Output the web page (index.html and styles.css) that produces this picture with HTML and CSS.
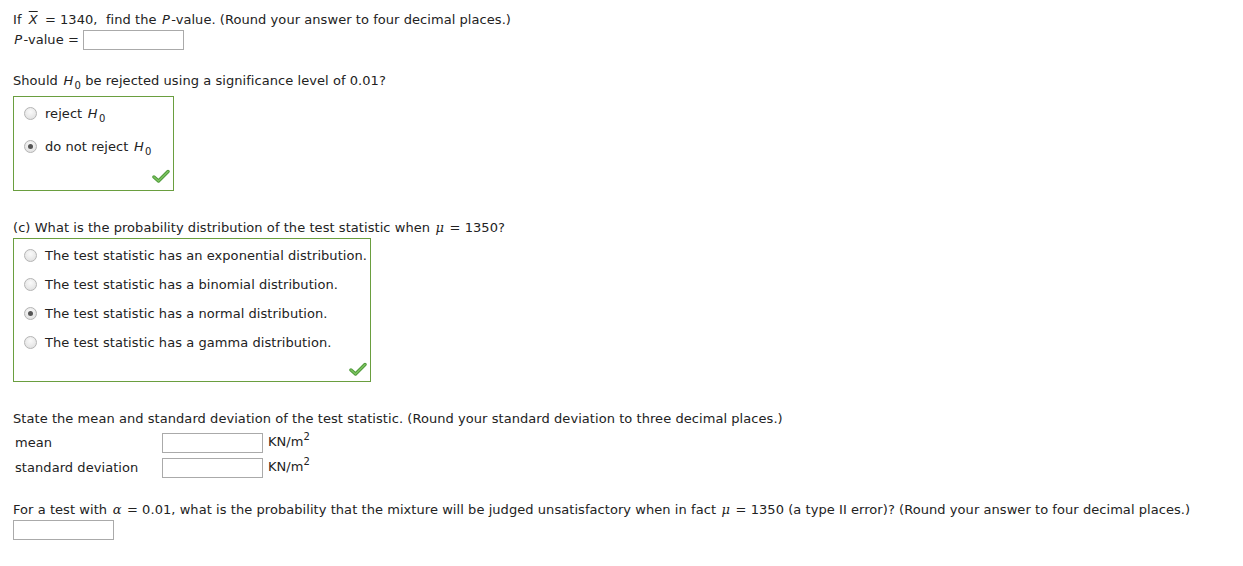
FILE: index.html
```html
<!DOCTYPE html>
<html>
<head>
<meta charset="utf-8">
<link rel="stylesheet" href="styles.css">
</head>
<body>
<div class="page">
  <div class="line">If <span class="xbar">X</span> = 1340,&nbsp; find the <i>P</i>-value. (Round your answer to four decimal places.)</div>
  <div class="line"><i>P</i>-value = <span class="inp"></span></div>

  <div class="line q2">Should <i>H</i><sub>0</sub> be rejected using a significance level of 0.01?</div>
  <div class="box box1">
    <div class="opt"><span class="radio"></span><span>reject <i>H</i><sub>0</sub></span></div>
    <div class="opt"><span class="radio on"></span><span>do not reject <i>H</i><sub>0</sub></span></div>
    <div class="checkrow">
      <svg class="check" width="18" height="15" viewBox="0 0 18 15"><path d="M2 8 L6.5 12 L16 2.5" fill="none" stroke="#4f9a3a" stroke-width="3.4" stroke-linecap="round" stroke-linejoin="round"/><path d="M2 8 L6.5 12 L16 2.5" fill="none" stroke="#7cc360" stroke-width="1.5" stroke-linecap="round" stroke-linejoin="round"/></svg>
    </div>
  </div>

  <div class="line q3">(c) What is the probability distribution of the test statistic when <i class="gr">μ</i> = 1350?</div>
  <div class="box box2">
    <div class="opt2"><span class="radio"></span><span>The test statistic has an exponential distribution.</span></div>
    <div class="opt2"><span class="radio"></span><span>The test statistic has a binomial distribution.</span></div>
    <div class="opt2"><span class="radio on"></span><span>The test statistic has a normal distribution.</span></div>
    <div class="opt2"><span class="radio"></span><span>The test statistic has a gamma distribution.</span></div>
    <div class="checkrow2">
      <svg class="check" width="18" height="15" viewBox="0 0 18 15"><path d="M2 8 L6.5 12 L16 2.5" fill="none" stroke="#4f9a3a" stroke-width="3.4" stroke-linecap="round" stroke-linejoin="round"/><path d="M2 8 L6.5 12 L16 2.5" fill="none" stroke="#7cc360" stroke-width="1.5" stroke-linecap="round" stroke-linejoin="round"/></svg>
    </div>
  </div>

  <div class="line q4">State the mean and standard deviation of the test statistic. (Round your standard deviation to three decimal places.)</div>
  <div class="grid">
    <div class="lbl">mean</div><span class="inp"></span><div class="unit">KN/m<sup>2</sup></div>
    <div class="lbl">standard deviation</div><span class="inp"></span><div class="unit">KN/m<sup>2</sup></div>
  </div>

  <div class="line q5">For a test with <i class="gr">α</i> = 0.01, what is the probability that the mixture will be judged unsatisfactory when in fact <i class="gr">μ</i> = 1350 (a type II error)? (Round your answer to four decimal places.)</div>
  <div class="line"><span class="inp"></span></div>
</div>
</body>
</html>
```

FILE: styles.css
```css
html, body {
  margin: 0;
  padding: 0;
  background: #fff;
}
.page {
  padding: 10px 0 0 13px;
  font-family: "DejaVu Sans", Verdana, sans-serif;
  font-size: 13px;
  letter-spacing: 0.06px;
  color: #222;
}
.line {
  display: block;
  height: 20px;
  line-height: 20px;
  white-space: nowrap;
}
.line i, .opt i, .opt2 i { margin: 0 0.1em; }
i { font-style: italic; }
sub {
  font-size: 10px;
  vertical-align: -4px;
  line-height: 0;
  font-style: normal;
}
sup {
  font-size: 10px;
  vertical-align: 6px;
  line-height: 0;
}
.gr { font-family: "DejaVu Serif", serif; }
.xbar {
  font-style: italic;
  text-decoration: overline;
  margin: 0 3px;
}
.inp {
  display: inline-block;
  box-sizing: border-box;
  width: 101px;
  height: 20px;
  border: 1px solid #aaa;
  background: #fff;
  vertical-align: top;
  margin: 0;
}
.q2 { margin-top: 21px; }
.box {
  box-sizing: border-box;
  border: 1px solid #6a9e3f;
}
.box1 {
  margin-top: 5px;
  width: 161px;
  height: 95px;
}
.opt {
  height: 33px;
  display: flex;
  align-items: center;
  padding-left: 10px;
  white-space: nowrap;
}
.radio {
  display: inline-block;
  box-sizing: border-box;
  width: 13px;
  height: 13px;
  border-radius: 50%;
  border: 1px solid #b4b4b4;
  background: radial-gradient(circle at 50% 35%, #fafafa 0%, #e2e2e2 80%);
  margin-right: 8px;
  position: relative;
  flex: none;
}
.radio.on::after {
  content: "";
  position: absolute;
  left: 3px;
  top: 3px;
  width: 5px;
  height: 5px;
  border-radius: 50%;
  background: #555;
}
.checkrow {
  height: 27px;
  display: flex;
  justify-content: flex-end;
  align-items: center;
  padding-right: 3px;
}
.q3 { margin-top: 27px; }
.box2 {
  width: 358px;
  height: 144px;
  padding-top: 2px;
}
.opt2 {
  height: 29px;
  display: flex;
  align-items: center;
  padding-left: 10px;
  white-space: nowrap;
}
.checkrow2 {
  height: 24px;
  display: flex;
  justify-content: flex-end;
  align-items: center;
  padding-right: 3px;
}
.q4 { margin-top: 27px; }
.grid {
  margin-top: 4px;
  display: grid;
  grid-template-columns: 145px 101px auto;
  grid-auto-rows: 20px;
  row-gap: 5px;
  column-gap: 4px;
  align-items: center;
}
.lbl { padding-left: 2px; margin-top: -2px; }
.unit { margin-top: -3px; padding-left: 1px; }
.q5 { margin-top: 22px; }
```
